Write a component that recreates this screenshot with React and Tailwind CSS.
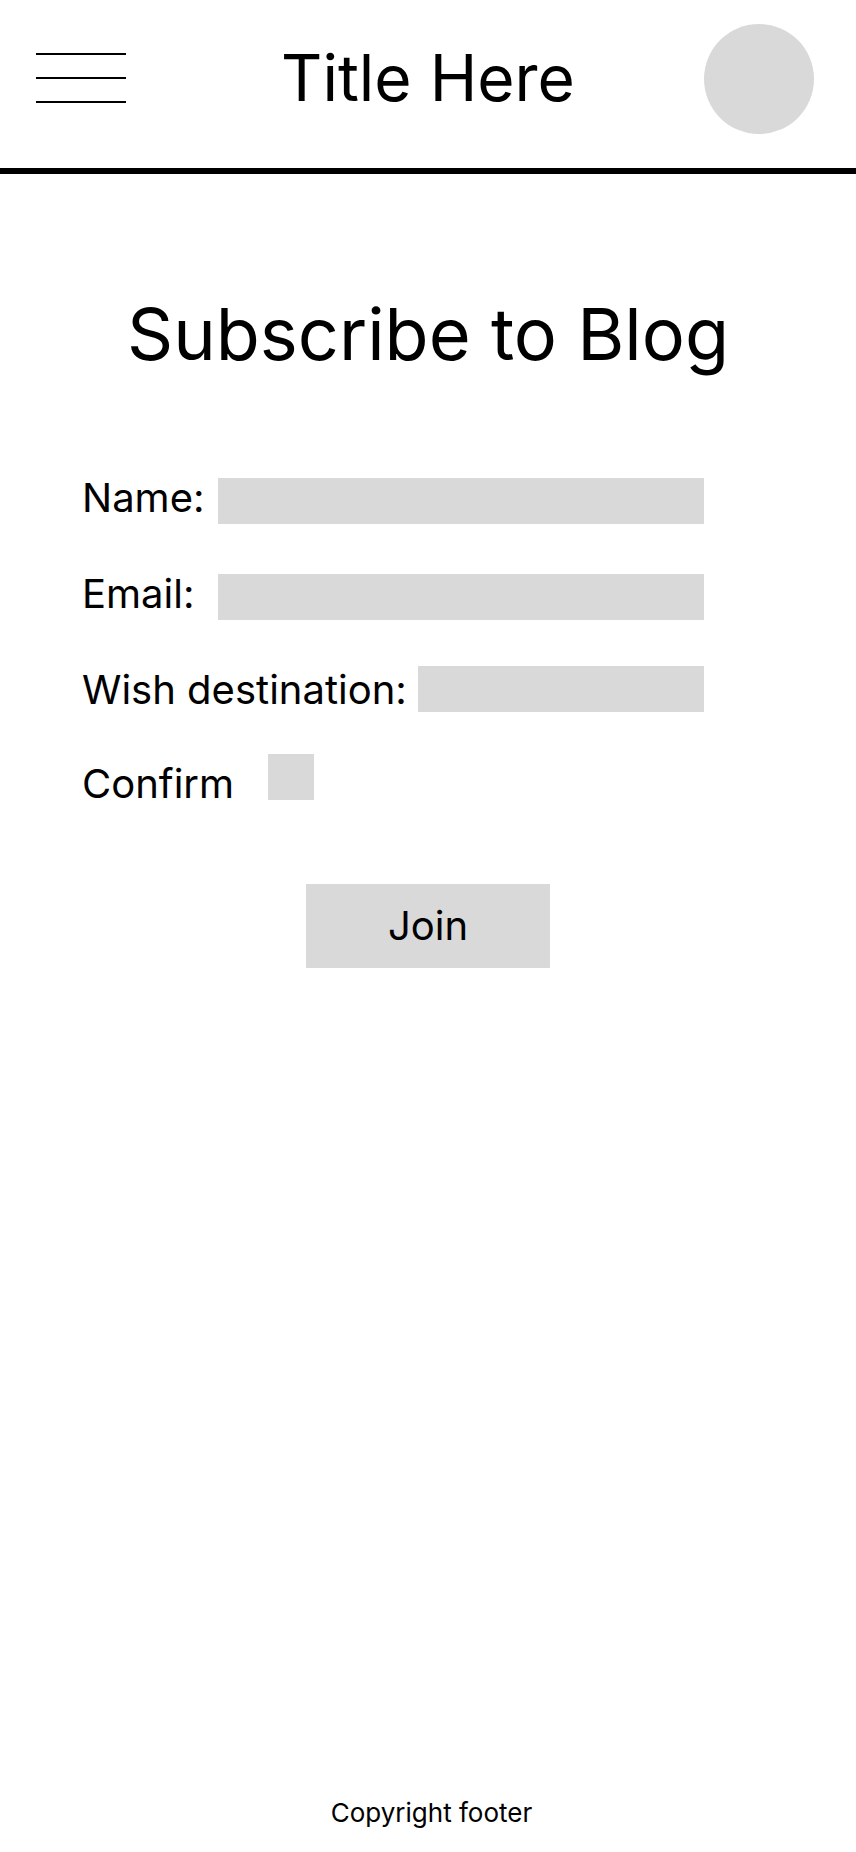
export default function App() {
  return (
    <div className="min-h-[1852px] w-full bg-white text-black flex flex-col" style={{ fontFamily: 'Inter, "Noto Sans", sans-serif' }}>
      <header className="h-[174px] border-b-[6px] border-black grid grid-cols-[1fr_auto_1fr] items-center pb-[12px]">
        <div className="ml-[36px] flex flex-col gap-[22px] w-[90px]">
          <div className="h-[2px] bg-black"></div>
          <div className="h-[2px] bg-black"></div>
          <div className="h-[2px] bg-black"></div>
        </div>
        <div className="text-[64px] leading-none">Title Here</div>
        <div className="justify-self-end mr-[42px] mt-[2px] w-[110px] h-[110px] rounded-full bg-[#d9d9d9]"></div>
      </header>

      <h1 className="mt-[124px] text-center text-[72px] leading-none font-normal">Subscribe to Blog</h1>

      <form className="mt-[108px] ml-[82px] w-[622px] flex flex-col text-[40px] leading-none">
        <div className="flex items-start h-[46px]">
          <label>Name:</label>
          <div className="ml-auto w-[486px] h-[46px] bg-[#d9d9d9]"></div>
        </div>
        <div className="flex items-start h-[46px] mt-[50px]">
          <label>Email:</label>
          <div className="ml-auto w-[486px] h-[46px] bg-[#d9d9d9]"></div>
        </div>
        <div className="flex items-start h-[46px] mt-[46px]">
          <label className="mt-[4px]">Wish destination:</label>
          <div className="ml-auto w-[286px] h-[46px] bg-[#d9d9d9]"></div>
        </div>
        <div className="flex items-start h-[46px] mt-[42px]">
          <label className="mt-[10px] w-[186px]">Confirm</label>
          <div className="w-[46px] h-[46px] bg-[#d9d9d9]"></div>
        </div>
      </form>

      <div className="mt-[84px] flex justify-center">
        <button type="button" className="w-[244px] h-[84px] bg-[#d9d9d9] text-[40px] leading-none text-black flex items-center justify-center">
          Join
        </button>
      </div>

      <footer className="mt-auto pb-[26px] pl-[7px] text-center text-[26px] leading-none">
        Copyright footer
      </footer>
    </div>
  );
}
